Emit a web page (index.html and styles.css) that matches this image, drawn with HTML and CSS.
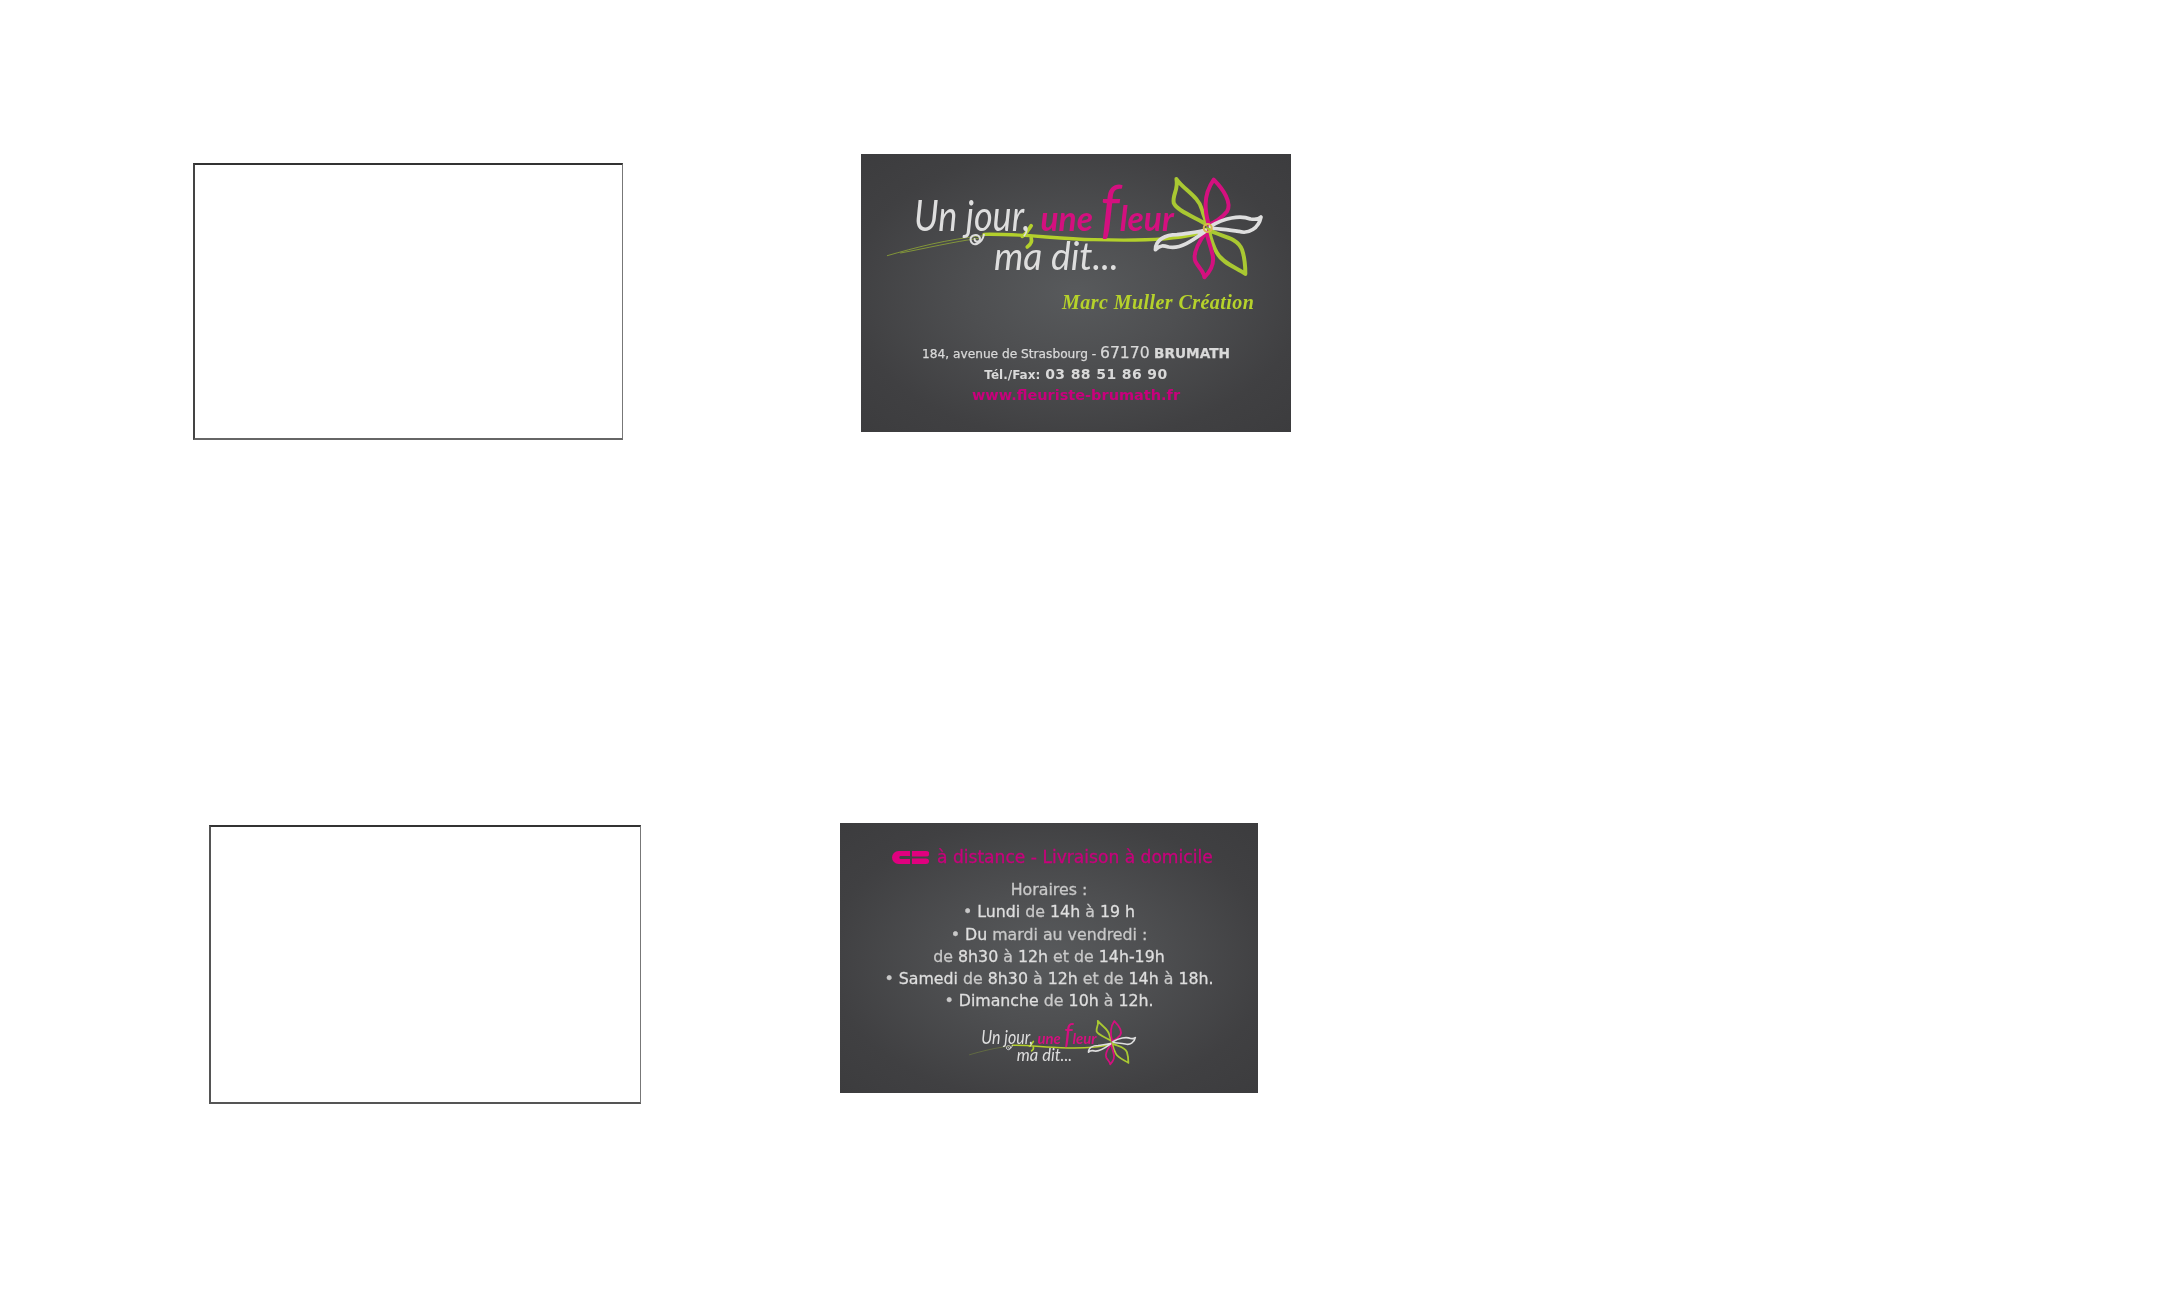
FILE: index.html
```html
<!DOCTYPE html>
<html lang="fr">
<head>
<meta charset="utf-8">
<title>Carte de visite</title>
<link rel="stylesheet" href="styles.css">
</head>
<body>
<main class="page">
  <section class="row row-front">
    <div class="blank blank-front"></div>
    <article class="card card-front">
      <svg class="logo logo-large" viewBox="130 100 1150 330" role="img">
        <g fill="none" stroke-linecap="round" stroke-linejoin="round">
          <path class="thin" d="M140 348C220 325 320 298 430 288"/>
          <path class="thin" d="M180 340C260 325 330 308 420 295"/>
          <path class="stem" d="M430 284C560 282 640 298 760 300C860 303 980 304 1060 285L1100 268"/>
          <path class="leaf" d="M572 258C560 275 555 285 545 290M572 295C575 305 570 315 560 322"/>
          <path class="curl" d="M430 285C425 312 395 325 390 302C388 285 412 280 418 295C420 308 402 310 402 298"/>
          <path class="petal-g" d="M1100 255C1070 235 1010 215 1000 190C995 165 1015 150 1008 118C1030 150 1075 170 1085 210C1090 230 1098 245 1100 255Z"/>
          <path class="petal-m" d="M1105 255C1095 220 1085 170 1120 120C1150 150 1175 190 1160 215C1145 235 1120 250 1105 255Z"/>
          <path class="petal-w" d="M1110 260C1150 235 1200 225 1230 238C1245 240 1255 240 1262 232C1255 265 1225 285 1195 275C1165 270 1130 268 1110 265"/>
          <path class="petal-g" d="M1105 270C1135 290 1190 290 1205 330C1215 360 1215 385 1215 403C1190 385 1145 370 1130 340C1115 315 1110 290 1105 270Z"/>
          <path class="petal-m" d="M1098 275C1080 300 1055 340 1065 365C1075 385 1090 395 1092 413C1110 395 1125 370 1115 340C1110 315 1100 295 1098 275Z"/>
          <path class="petal-w" d="M1095 275C1060 300 1020 330 985 322C970 318 960 315 945 330C945 300 975 285 1010 285C1040 280 1075 278 1095 272"/>
          <circle class="heart" cx="1102" cy="265" r="12"/>
        </g>
        <text class="script script-white script-top" x="220" y="275" textLength="350" lengthAdjust="spacingAndGlyphs">Un jour,</text>
        <text class="script script-pink" x="600" y="275" textLength="400" lengthAdjust="spacingAndGlyphs">une <tspan class="script-f">f</tspan>leur</text>
        <text class="script script-white script-low" x="460" y="390" textLength="375" lengthAdjust="spacingAndGlyphs">ma dit...</text>
      </svg>
      <p class="creator">Marc Muller Création</p>
      <div class="contact">
        <p class="address"><span class="small">184, avenue de Strasbourg - </span><span class="zip">67170</span> <b>BRUMATH</b></p>
        <p class="phone"><span class="tiny">Tél./Fax:</span> <b>03 88 51 86 90</b></p>
        <p class="web">www.fleuriste-brumath.fr</p>
      </div>
    </article>
  </section>

  <section class="row row-back">
    <div class="blank blank-back"></div>
    <article class="card card-back">
      <p class="service">
        <svg class="cb" viewBox="0 0 37 13" role="img" aria-label="CB"><path d="M6.500 0H18V5H8.500C7 5 7 8 8.500 8H18V13H6.500A6.500 6.500 0 0 1 6.500 0Z"/><path d="M20 0H34A3 2.500 0 0 1 34 5.500H20ZM20 7.500H34A3 2.700 0 0 1 34 13H20Z"/></svg>
        <span>à distance - Livraison à domicile</span>
      </p>
      <ul class="hours">
        <li>Horaires :</li>
        <li>• <b>Lundi</b> de <b>14h</b> à <b>19 h</b></li>
        <li>• <b>Du</b> mardi au vendredi :</li>
        <li>de <b>8h30</b> à <b>12h</b> et de <b>14h-19h</b></li>
        <li>• <b>Samedi</b> de <b>8h30</b> à <b>12h</b> et de <b>14h</b> à <b>18h.</b></li>
        <li>• <b>Dimanche</b> de <b>10h</b> à <b>12h.</b></li>
      </ul>
      <svg class="logo logo-small" viewBox="130 100 1150 330" role="img">
        <g fill="none" stroke-linecap="round" stroke-linejoin="round">
          <path class="thin" d="M140 348C220 325 320 298 430 288"/>
          <path class="stem" d="M430 284C560 282 640 298 760 300C860 303 980 304 1060 285L1100 268"/>
          <path class="leaf" d="M572 258C560 275 555 285 545 290M572 295C575 305 570 315 560 322"/>
          <path class="curl" d="M430 285C425 312 395 325 390 302C388 285 412 280 418 295C420 308 402 310 402 298"/>
          <path class="petal-g" d="M1100 255C1070 235 1010 215 1000 190C995 165 1015 150 1008 118C1030 150 1075 170 1085 210C1090 230 1098 245 1100 255Z"/>
          <path class="petal-m" d="M1105 255C1095 220 1085 170 1120 120C1150 150 1175 190 1160 215C1145 235 1120 250 1105 255Z"/>
          <path class="petal-w" d="M1110 260C1150 235 1200 225 1230 238C1245 240 1255 240 1262 232C1255 265 1225 285 1195 275C1165 270 1130 268 1110 265"/>
          <path class="petal-g" d="M1105 270C1135 290 1190 290 1205 330C1215 360 1215 385 1215 403C1190 385 1145 370 1130 340C1115 315 1110 290 1105 270Z"/>
          <path class="petal-m" d="M1098 275C1080 300 1055 340 1065 365C1075 385 1090 395 1092 413C1110 395 1125 370 1115 340C1110 315 1100 295 1098 275Z"/>
          <path class="petal-w" d="M1095 275C1060 300 1020 330 985 322C970 318 960 315 945 330C945 300 975 285 1010 285C1040 280 1075 278 1095 272"/>
        </g>
        <text class="script script-white script-top" x="220" y="275" textLength="350" lengthAdjust="spacingAndGlyphs">Un jour,</text>
        <text class="script script-pink" x="600" y="275" textLength="400" lengthAdjust="spacingAndGlyphs">une <tspan class="script-f">f</tspan>leur</text>
        <text class="script script-white script-low" x="460" y="390" textLength="375" lengthAdjust="spacingAndGlyphs">ma dit...</text>
      </svg>
    </article>
  </section>
</main>
</body>
</html>
```
FILE: styles.css
```css
* { box-sizing: border-box; }
html, body { margin: 0; background: #fff; }
p, ul { margin: 0; padding: 0; }
ul { list-style: none; }

.page {
  width: 2181px;
  height: 1309px;
  padding-top: 154px;
  overflow: hidden;
  font-family: "DejaVu Sans", sans-serif;
}

.row { display: flex; align-items: flex-start; }
.row-front { padding-left: 193px; }
.row-back { padding-left: 209px; margin-top: 383px; }

.blank {
  background: #fff;
  border-style: solid;
  filter: blur(0.35px);
}
.blank-front {
  width: 430px;
  height: 277px;
  margin-top: 9px;
  margin-right: 1px;
  border-width: 2px 1px 2px 2px;
  border-color: #333 #777 #666 #444;
}
.blank-back {
  width: 432px;
  height: 279px;
  margin-top: 2px;
  border-width: 2px 1px 2px 2px;
  border-color: #333 #777 #555 #555;
}

.card {
  display: flex;
  flex-direction: column;
  background: radial-gradient(ellipse at 50% 50%, #585a5c 0%, #4e4f51 35%, #404042 75%, #3c3c3e 100%);
  color: #d9d9d9;
}
.card > * { filter: blur(0.55px); }
.card-front { width: 430px; height: 278px; margin-left: 237px; padding-top: 19px; }
.card-back { width: 418px; height: 270px; margin-left: 199px; padding-top: 24px; }

.logo { display: block; flex: none; overflow: visible; }
.logo-large { width: 383px; height: 110px; margin-left: 23px; }
.logo-small { width: 170px; height: 49px; margin-top: 5px; margin-left: 128px; }

.thin { stroke: #a6c531; stroke-width: 2.500; opacity: .75; }
.stem { stroke: #b3d02c; stroke-width: 10; }
.leaf { stroke: #b3d02c; stroke-width: 11; }
.curl { stroke: #dcdcdc; stroke-width: 6; }
.petal-g { stroke: #a9c832; stroke-width: 12; }
.petal-m { stroke: #d4107f; stroke-width: 12; }
.petal-w { stroke: #dedede; stroke-width: 11; }
.heart { stroke: #d9b84a; stroke-width: 6; }

.script {
  font-family: "Lato", sans-serif;
  font-style: italic;
  font-size: 105px;
}
.script-top { font-size: 125px; }
.script-low { font-size: 115px; }
.script-white { fill: #dedede; }
.script-pink { fill: #d4107f; font-weight: 700; }
.script-f { font-size: 190px; font-weight: 400; }

.creator {
  margin-top: 7px;
  margin-left: 201px;
  width: 200px;
  font-family: "Liberation Serif", serif;
  font-style: italic;
  font-weight: 700;
  font-size: 20px;
  line-height: 24px;
  letter-spacing: 0.45px;
  white-space: nowrap;
  color: #b6d22b;
}

.contact { margin-top: 29px; text-align: center; white-space: nowrap; }
.address, .phone, .web { height: 21px; line-height: 21px; }
.address { font-size: 13.7px; -webkit-text-stroke: 0.25px; }
.address .small { font-size: 12.2px; }
.address .zip { font-size: 15.6px; font-weight: 400; }
.phone { font-size: 14px; letter-spacing: 0.4px; }
.phone .tiny { font-size: 12px; font-weight: 700; letter-spacing: 0; }
.web { font-size: 14.5px; font-weight: 700; color: #c8007c; }

.service {
  display: flex;
  align-items: center;
  gap: 8px;
  padding-left: 52px;
  height: 20px;
  white-space: nowrap;
  font-size: 17.1px;
  -webkit-text-stroke: 0.3px;
  color: #c8007c;
}
.cb { display: block; flex: none; width: 37px; height: 13px; fill: #e0007f; }

.hours {
  margin-top: 12px;
  text-align: center;
  font-size: 15.8px;
  line-height: 22.3px;
  white-space: nowrap;
  -webkit-text-stroke: 0.3px;
  color: #c8c8c8;
}
.hours b { font-weight: 400; color: #dedede; }
```
